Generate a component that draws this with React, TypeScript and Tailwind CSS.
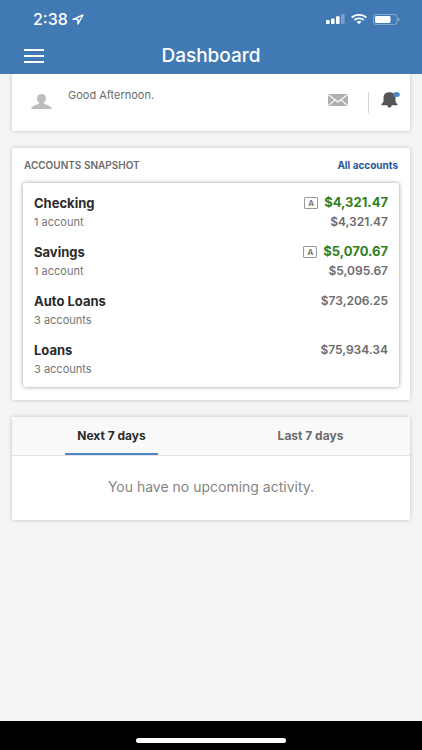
import { useState } from 'react'

type Account = {
  name: string
  count: string
  available?: string
  balance: string
}

const ACCOUNTS: Account[] = [
  { name: 'Checking', count: '1 account', available: '$4,321.47', balance: '$4,321.47' },
  { name: 'Savings', count: '1 account', available: '$5,070.67', balance: '$5,095.67' },
  { name: 'Auto Loans', count: '3 accounts', balance: '$73,206.25' },
  { name: 'Loans', count: '3 accounts', balance: '$75,934.34' },
]

const TABS = ['Next 7 days', 'Last 7 days']

const CARD = 'rounded-[2px] bg-white shadow-[0_0_4px_rgba(0,0,0,0.2)]'

export default function App() {
  return (
    <div className="flex min-h-screen flex-col bg-[#f4f4f4] font-['Inter',sans-serif] text-[#6b6b6b]">
      <header className="relative z-10 bg-[#4179b5] text-white">
        <StatusBar />
        <div className="grid h-9 grid-cols-[1fr_auto_1fr] items-center px-6">
          <button type="button" aria-label="Menu" className="flex w-5 flex-col gap-1">
            <span className="h-[2px] bg-white" />
            <span className="h-[2px] bg-white" />
            <span className="h-[2px] bg-white" />
          </button>
          <h1 className="text-[19px] leading-6 font-medium">Dashboard</h1>
        </div>
      </header>

      <main className="flex flex-1 flex-col gap-[17px] px-3 pb-6">
        <Greeting />
        <Snapshot />
        <Activity />
      </main>

      <footer className="flex h-[29px] justify-center bg-black pt-[17px]">
        <span className="h-[5px] w-[150px] rounded-full bg-white" />
      </footer>
    </div>
  )
}

function StatusBar() {
  return (
    <div className="flex h-[38px] items-center justify-between pr-[22px] pl-[33px]">
      <div className="flex items-center gap-1">
        <span className="text-[16px] leading-5 font-medium">2:38</span>
        <svg width="12" height="11" viewBox="0 0 12 11" fill="none" stroke="currentColor" strokeWidth="1.4" strokeLinejoin="round">
          <path d="M11 1 1 5.4h5V10z" />
        </svg>
      </div>
      <div className="flex items-center gap-[6px]">
        <svg width="19" height="10" viewBox="0 0 19 10" fill="currentColor">
          <rect x="0" y="6" width="3.6" height="4" rx="1" />
          <rect x="5" y="4.4" width="3.6" height="5.6" rx="1" />
          <rect x="10" y="2.2" width="3.6" height="7.8" rx="1" />
          <rect x="15" y="0" width="3.6" height="10" rx="1" opacity="0.3" />
        </svg>
        <svg width="16" height="10" viewBox="0 0 16 10" fill="none" stroke="currentColor" strokeWidth="1.9">
          <path d="M.7 3.5C4.7 0 11.3 0 15.3 3.5" />
          <path d="M3.4 6c2.6-2.2 6.6-2.2 9.2 0" />
          <path d="M8 10 5.5 7.9c1.4-1.1 3.6-1.1 5 0z" fill="currentColor" stroke="none" />
        </svg>
        <svg width="27" height="11" viewBox="0 0 27 11" fill="none">
          <rect x=".5" y=".5" width="23.5" height="10" rx="2.6" stroke="white" strokeOpacity="0.35" />
          <rect x="2" y="2" width="15.5" height="7" rx="1.4" fill="white" />
          <path d="M25.2 3.8c1.6.5 1.6 2.9 0 3.4z" fill="white" fillOpacity="0.5" />
        </svg>
      </div>
    </div>
  )
}

function Greeting() {
  return (
    <section className={`${CARD} flex h-[57px] items-start pr-[10px] pl-[19px]`}>
      <svg className="mt-5" width="21" height="15" viewBox="0 0 21 15" fill="#bdbdbd">
        <path d="M10.5 0c2.6 0 4.4 1.6 4.4 4.2 0 2-.9 3.600-2 4.400v1.200c1 1 7.500 1.400 7.900 5.200H.2c.4-3.800 6.900-4.200 7.900-5.200V8.600c-1.100-.8-2-2.400-2-4.400C6.100 1.600 7.900 0 10.500 0z" />
      </svg>
      <p className="mt-3 ml-4 text-[11px] leading-[18px]">Good Afternoon.</p>
      <button type="button" aria-label="Messages" className="mt-5 ml-auto">
        <svg width="20" height="12" viewBox="0 0 20 12">
          <rect width="20" height="12" rx="1.2" fill="#b0b0b0" />
          <path d="M.5.8 10 8 19.5.8M.5 11.4l6.600-5.600M19.5 11.4l-6.600-5.600" fill="none" stroke="white" strokeWidth="1.1" />
        </svg>
      </button>
      <span className="mt-[18px] ml-5 h-[21px] w-px bg-[#d4d4d4]" />
      <button type="button" aria-label="Notifications" className="mt-[17px] ml-3">
        <svg width="19" height="18" viewBox="0 0 19 18">
          <path d="M8.500 1.200c3.900 0 6 2.100 6 5.600v3.500c0 1.600 2.200 2.300 2.200 3.900H.3c0-1.600 2.200-2.300 2.200-3.900V6.800c0-3.500 2.100-5.600 6-5.600zM6.300 14.200h4.400c-.2 1.600-1 2.400-2.200 2.400s-2-.8-2.200-2.400z" fill="#555" />
          <ellipse cx="15.600" cy="3.500" rx="3.200" ry="2.500" fill="#4a86c8" />
        </svg>
      </button>
    </section>
  )
}

function Snapshot() {
  return (
    <section className={`${CARD} px-[11px] pt-2 pb-[13px]`}>
      <div className="mb-[9px] flex items-center justify-between px-px leading-[18px]">
        <h2 className="text-[10px] font-semibold">ACCOUNTS SNAPSHOT</h2>
        <a href="#accounts" className="text-[10px] font-bold text-[#2a559b]">
          All accounts
        </a>
      </div>
      <ul className="flex flex-col gap-[11px] rounded-[3px] bg-white px-[11px] pt-[10px] pb-[9px] shadow-[0_0_4px_rgba(0,0,0,0.4)]">
        {ACCOUNTS.map((account) => (
          <AccountRow key={account.name} account={account} />
        ))}
      </ul>
    </section>
  )
}

function AccountRow({ account }: { account: Account }) {
  return (
    <li>
      <div className="flex h-5 items-center justify-between">
        <h3 className="text-[13px] leading-5 font-bold text-[#2b2b2b]">{account.name}</h3>
        {account.available ? (
          <div className="flex items-center gap-[6px]">
            <span className="flex h-3 w-[14px] items-center justify-center rounded-[1px] border border-[#999] text-[8px] font-semibold">
              A
            </span>
            <span className="text-[13px] font-bold text-[#317f22]">{account.available}</span>
          </div>
        ) : (
          <span className="text-[12px] font-semibold">{account.balance}</span>
        )}
      </div>
      <div className="flex h-[18px] items-center justify-between">
        <span className="text-[11px] text-[#757575]">{account.count}</span>
        {account.available && <span className="text-[12px] font-semibold">{account.balance}</span>}
      </div>
    </li>
  )
}

function Activity() {
  const [active, setActive] = useState(0)

  return (
    <section className={CARD}>
      <div role="tablist" className="grid grid-cols-2 border-b border-[#e2e2e2] bg-[#f9f9f9]">
        {TABS.map((tab, i) => (
          <button
            key={tab}
            type="button"
            role="tab"
            aria-selected={active === i}
            onClick={() => setActive(i)}
            className="flex justify-center"
          >
            <span
              className={
                active === i
                  ? 'border-b-2 border-[#4a86c8] px-3 pt-[10px] pb-2 text-[12px] leading-[18px] font-bold text-[#2b2b2b]'
                  : 'border-b-2 border-transparent px-3 pt-[10px] pb-2 text-[12px] leading-[18px] font-bold'
              }
            >
              {tab}
            </span>
          </button>
        ))}
      </div>
      <p className="pt-[21px] pb-[23px] text-center text-[14px] leading-5 text-[#858585]">
        {active === 0 ? 'You have no upcoming activity.' : 'You have no recent activity.'}
      </p>
    </section>
  )
}
